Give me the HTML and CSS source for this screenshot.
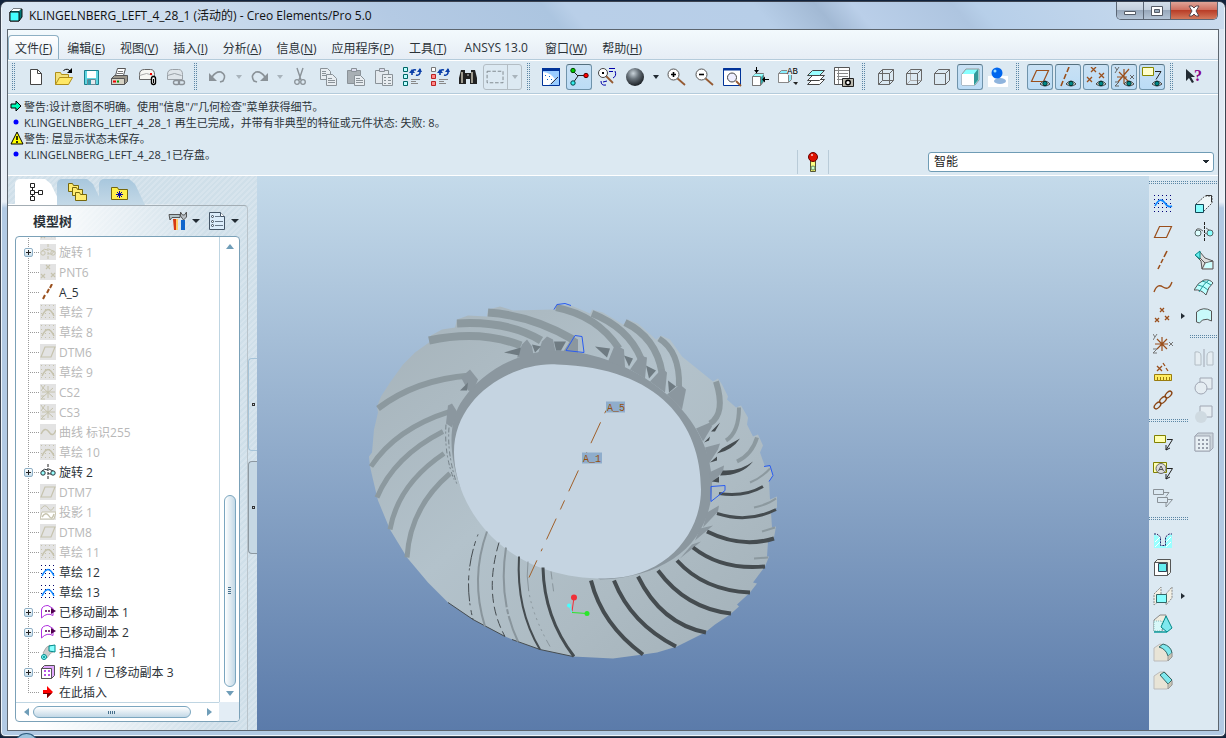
FILE: index.html
```html
<!DOCTYPE html>
<html lang="zh-CN">
<head>
    <meta charset="UTF-8">
    <meta name="viewport" content="width=device-width, initial-scale=1.0">
    <title>KLINGELNBERG_LEFT_4_28_1 (活动的) - Creo Elements/Pro 5.0</title>
    <link rel="stylesheet" href="styles.css">
</head>
<body>
    <!-- Iconos compartidos -->
    <svg class="defs" width="0" height="0">
        <symbol id="t-rev" viewBox="0 0 16 16"><path d="M8 0v16" stroke="var(--dot)" stroke-dasharray="3 1"/><path d="M2 7Q4 4 8 6M8 9Q12 12 14 7M9 5l4 2" stroke="currentColor" fill="none"/><circle cx="3" cy="9" r="2.2" fill="var(--fill)" stroke="currentColor"/><circle cx="13" cy="9" r="2.2" fill="var(--fill)" stroke="currentColor"/></symbol>
        <symbol id="t-pnt" viewBox="0 0 16 16"><path d="M6 1l4 4m0-4l-4 4M1 10l4 4m0-4l-4 4M11 9l4 4m0-4l-4 4" stroke="currentColor" stroke-width="1.2"/></symbol>
        <symbol id="t-axis" viewBox="0 0 16 16"><path d="M3 15l2-4M7 9l2-4M10 4l2-4" stroke="#9a4f1c" stroke-width="2"/></symbol>
        <symbol id="t-sketch" viewBox="0 0 16 16"><path d="M1 1.500h15M1 5.500h15M1 9.500h15M1 13.500h15" stroke="var(--dot)" stroke-dasharray="1 3"/><path d="M2 12Q8-1 14 12" stroke="currentColor" stroke-width="1.4" fill="none"/></symbol>
        <symbol id="t-dtm" viewBox="0 0 16 16"><path d="M5 3h10l-4 10H1z" stroke="currentColor" stroke-width="1.2" fill="none"/></symbol>
        <symbol id="t-cs" viewBox="0 0 16 16"><path d="M8 2v12M3 4l10 9M13 4L3 13M2 8h13M1 1l2 3m2-3L1 7M1 12h3l-3 3h4" stroke="currentColor" fill="none"/></symbol>
        <symbol id="t-curve" viewBox="0 0 16 16"><path d="M1 10Q5 2 9 8T16 6" stroke="currentColor" stroke-width="1.4" fill="none"/></symbol>
        <symbol id="t-proj" viewBox="0 0 16 16"><path d="M1 5Q5-1 8 4t6-1" stroke="currentColor" fill="none"/><path d="M2 8h14l-2 7H0z" fill="#fff" stroke="currentColor"/><path d="M2 13Q6 7 9 12t5-2" stroke="currentColor" stroke-width="1.4" fill="none"/></symbol>
        <symbol id="t-move" viewBox="0 0 16 16"><path d="M1.500 14V6Q2 1.500 8 1.500l5 3v7Q7 8 1.500 14z" fill="#fff" stroke="#b030e0"/><path d="M5 7h7" stroke="#500050" stroke-width="1.600" stroke-dasharray="2 1"/><path d="M11 4l5 3-5 3z" fill="#500050"/></symbol>
        <symbol id="t-sweep" viewBox="0 0 16 16"><path d="M3 9Q6 2 10 1l5 6q-5 1-8 7z" fill="#ccc" stroke="#888" stroke-width=".6"/><path d="M9 2l6-1v7l-6-1z" fill="#8ff" stroke="#088"/><circle cx="4" cy="13" r="2.500" fill="#8ff" stroke="#088"/><circle cx="4" cy="13" r="1" fill="#088"/></symbol>
        <symbol id="t-pattern" viewBox="0 0 16 16"><path d="M1.500 4.500l3-3h10v10l-3 3h-10z" fill="#e2a8ff" stroke="#555"/><path d="M1.500 4.500h10v10h-10z" fill="#fff" stroke="#555"/><path d="M4 7h6M4 11h6" stroke="#a020e0" stroke-width="1.600" stroke-dasharray="2 2"/></symbol>
        <symbol id="t-insert" viewBox="0 0 16 16"><path d="M3 6h4V2l6 6-6 6v-4H3z" fill="#f00"/><path d="M3 9h9l-5 5v-4H3z" fill="#700"/></symbol>
        <symbol id="eye" viewBox="0 0 10 8"><path d="M0 5Q5-1 10 5 5 9 0 5z" fill="#ddd" stroke="#444"/><circle cx="5" cy="4.500" r="2.200" fill="#088" stroke="#033"/></symbol>
        <symbol id="note" viewBox="0 0 20 20"><path d="M1.500 3.500h11v7h-11z" fill="var(--paper)" stroke="var(--edge)"/><path d="M14 7.500h5.500L13 18m0-5v5l4-2" fill="none" stroke="var(--ink)"/></symbol>
    </svg>

    <div class="window">
        <div class="titlebar">
            <svg class="app-icon" viewBox="0 0 14 14"><path d="M1 4l3-3h9v8l-3 4H1z" fill="#077" stroke="#111"/><path d="M1 4h9v9H1z" fill="#4ff" stroke="#111"/><path d="M2 3l2-2h8l-2 2z" fill="#fff"/></svg>
            <span class="title">KLINGELNBERG_LEFT_4_28_1 (活动的) - Creo Elements/Pro 5.0</span>
            <div class="window-buttons">
                <button aria-label="最小化"><svg viewBox="0 0 14 12"><path d="M1.500 6.500h11v3h-11z" fill="#fff" stroke="#555b66"/></svg></button>
                <button aria-label="最大化"><svg viewBox="0 0 14 12"><path d="M1.500 1.500h11v9h-11z" fill="#fff" stroke="#555b66"/><path d="M4.500 4.500h5v3h-5z" fill="#9ab" stroke="#555b66"/></svg></button>
                <button class="close" aria-label="关闭"><svg viewBox="0 0 14 12"><path d="M2 1h3l2 2 2-2h3l-3 5 3 5H9L7 9l-2 2H2l3-5z" fill="#fff" stroke="#59464c"/></svg></button>
            </div>
        </div>

        <div class="client">
            <nav class="menubar">
                <button class="active">文件(<u>F</u>)</button>
                <button>编辑(<u>E</u>)</button>
                <button>视图(<u>V</u>)</button>
                <button>插入(<u>I</u>)</button>
                <button>分析(<u>A</u>)</button>
                <button>信息(<u>N</u>)</button>
                <button>应用程序(<u>P</u>)</button>
                <button>工具(<u>T</u>)</button>
                <button class="wide">ANSYS 13.0</button>
                <button>窗口(<u>W</u>)</button>
                <button>帮助(<u>H</u>)</button>
            </nav>

            <div class="toolbar">
                <span class="grip"></span>
                <button class="tool" aria-label="新建"><svg viewBox="0 0 20 20"><path d="M4.500 2.500h7l4 4v11h-11z" fill="#fff" stroke="#444"/><path d="M11.500 2.500v4h4" fill="none" stroke="#444"/></svg></button>
                <button class="tool" aria-label="打开"><svg viewBox="0 0 20 20"><path d="M1.500 17.500v-12h5l1 2h7v3" fill="#f3e27c" stroke="#b08e18"/><path d="M1.500 17.500l4-7h13l-4 7z" fill="#ffe866" stroke="#b08e18"/><path d="M9.500 3.500q4-3 7 1" fill="none" stroke="#000"/><path d="M18 1v5h-5z" fill="#000"/></svg></button>
                <button class="tool" aria-label="保存"><svg viewBox="0 0 20 20"><path d="M2.500 3.500h14v14h-14z" fill="#5fd6e2" stroke="#1b7f8c"/><path d="M5 4h9v7H5z" fill="#fff"/><path d="M5.500 12.500h8v5h-8z" fill="#e4eaee" stroke="#6a8a96"/><path d="M6 13h3v5H6z" fill="#39a"/></svg></button>
                <button class="tool" aria-label="打印"><svg viewBox="0 0 20 20"><path d="M5.500 8.500l2-7h8l-2 7z" fill="#fff" stroke="#555"/><path d="M8 4.500h5M7 6.500h6" stroke="#777"/><path d="M1.500 11.500l3-3h13v6l-3 3h-13z" fill="#9b968a" stroke="#555"/><path d="M1.500 11.500h13v6h-13z" fill="#d7d3c5" stroke="#555"/><path d="M3 14.500h3" stroke="#e00" stroke-width="2"/><path d="M7 14.500h2" stroke="#090" stroke-width="2"/></svg></button>
                <button class="tool" aria-label="附件发送"><svg viewBox="0 0 20 20"><path d="M1.500 12.500v-5q0-5 5-5h6q4 0 4 5v5z" fill="#f7f7f3" stroke="#666"/><path d="M1.500 8.500l7-2 7 2" fill="none" stroke="#aaa"/><path d="M12 6h2v2h-2z" fill="#e00"/><rect x="13.500" y="9.500" width="4" height="8" rx="2" fill="#fff" stroke="#000" stroke-width="1.400"/><path d="M15.500 12v4" stroke="#000"/></svg></button>
                <button class="tool" aria-label="链接发送"><svg viewBox="0 0 20 20"><path d="M1.500 12.500v-5q0-5 5-5h6q4 0 4 5v5z" fill="#dfe5ea" stroke="#9aa1a7"/><path d="M1.500 8.500l7-2 7 2" fill="none" stroke="#9aa1a7"/><rect x="7.500" y="13.500" width="6" height="4" rx="2" fill="none" stroke="#8b9298" stroke-width="1.400"/><rect x="12.500" y="13.500" width="6" height="4" rx="2" fill="none" stroke="#8b9298" stroke-width="1.400"/></svg></button>
                <span class="grip"></span>
                <button class="tool" aria-label="撤消"><svg viewBox="0 0 20 20"><path d="M4 10q4-6 9-5 6 3 2 9l-3 1" fill="none" stroke="#8a9298" stroke-width="1.600"/><path d="M1 6v8h8z" fill="#8a9298"/></svg></button>
                <button class="drop off" aria-label="撤消列表"></button>
                <button class="tool" aria-label="重做"><svg viewBox="0 0 20 20"><path d="M16 10q-4-6-9-5-6 3-2 9l3 1" fill="none" stroke="#8a9298" stroke-width="1.600"/><path d="M19 6v8h-8z" fill="#8a9298"/></svg></button>
                <button class="drop off" aria-label="重做列表"></button>
                <button class="tool" aria-label="剪切"><svg viewBox="0 0 20 20"><path d="M7 1l4 12M13 1L9 13" stroke="#8a9298" stroke-width="1.400"/><circle cx="7" cy="15" r="2.300" fill="none" stroke="#8a9298" stroke-width="1.300"/><circle cx="13" cy="15" r="2.300" fill="none" stroke="#8a9298" stroke-width="1.300"/></svg></button>
                <button class="tool" aria-label="复制"><svg viewBox="0 0 20 20"><g fill="#e8edf1" stroke="#8a9298"><path d="M2.500 1.500h7l3 3v8h-10z"/><path d="M4 4.500h4M4 6.500h4M4 8.500h4"/><path d="M8.500 7.500h6l4 4v7h-10z"/><path d="M10 11.500h4M10 13.500h7M10 15.500h7"/></g></svg></button>
                <button class="tool" aria-label="粘贴"><svg viewBox="0 0 20 20"><path d="M1.500 3.500h13v13h-13z" fill="#a8afb4" stroke="#8a9298"/><path d="M5.500 1.500h5v3h-5z" fill="#dde" stroke="#8a9298"/><path d="M8.500 8.500h6l4 4v6h-10z" fill="#e8edf1" stroke="#8a9298"/><path d="M10 11.500h4M10 13.500h7M10 15.500h7" stroke="#8a9298"/></svg></button>
                <button class="tool" aria-label="选择性粘贴"><svg viewBox="0 0 20 20"><path d="M1.500 3.500h13v13h-13z" fill="#e3e9ee" stroke="#8a9298"/><path d="M5.500 1.500h5v3h-5z" fill="#dde" stroke="#8a9298"/><path d="M8.500 7.500h10v11h-10z" fill="#e8edf1" stroke="#8a9298"/><path d="M10 10.500h2M10 13.500h2M10 16.500h2M14 10.500h3M14 13.500h3M14 16.500h3" stroke="#8a9298"/></svg></button>
                <button class="tool" aria-label="再生"><svg viewBox="0 0 20 20"><path d="M1.500.5h4v4h-4zM1.500 7.500h4v4h-4zM1.500 14.500h4v4h-4z" fill="#bff" stroke="#066"/><path d="M9 12.500h9M9 14.500h5M9 16.500h7" stroke="#888"/><path d="M10 8V5q1-3 4-2M18 2v4q-1 3-4 2" fill="none" stroke="#0a3fa8" stroke-width="1.600"/><path d="M7 6h6l-3-4zM15 5h5l-2-4z" fill="#0a3fa8"/></svg></button>
                <button class="tool" aria-label="再生管理器"><svg viewBox="0 0 20 20"><path d="M1.500.5h4v4h-4z" fill="#fff" stroke="#777"/><path d="M1.500 7.500h4v4h-4zM1.500 14.500h4v4h-4z" fill="#f88" stroke="#b22"/><path d="M9 12.500h9M9 14.500h5M9 16.500h7" stroke="#888"/><path d="M10 8V5q1-3 4-2M18 2v4q-1 3-4 2" fill="none" stroke="#0a3fa8" stroke-width="1.600"/><path d="M7 6h6l-3-4zM15 5h5l-2-4z" fill="#0a3fa8"/></svg></button>
                <button class="tool" aria-label="查找"><svg viewBox="0 0 20 20"><path d="M3 3h4v3h6V3h4l2 8v6h-7v-5H8v5H1v-6z" fill="#222"/><path d="M4 5v11M14 5v11" stroke="#c9c3b4" stroke-width="1.500"/><path d="M9 8h2" stroke="#ccc"/></svg></button>
                <button class="picker" aria-label="选择框"><svg viewBox="0 0 26 24"><path d="M3.500 5.500h18v13h-18z" fill="none" stroke="#777f85" stroke-dasharray="4 2"/></svg><span class="drop off"></span></button>
                <span class="grip"></span>
                <button class="tool" aria-label="重画"><svg viewBox="0 0 20 20"><path d="M1.500 1.500h17v17h-17z" fill="#9cf" stroke="#039"/><path d="M1 2.500h18" stroke="#039" stroke-width="3"/><path d="M2 5q8 1 12 7l-6 6H2z" fill="#fff"/><path d="M4 8l1 1M8 9l1 1M6 12l1 1M10 12l1 1" stroke="#06c"/><path d="M10 17l7-7" stroke="#334"/></svg></button>
                <button class="tool on" aria-label="旋转中心"><svg viewBox="0 0 20 20"><path d="M4 4l5 5-5 7M9 8.500h8" fill="none" stroke="#222"/><circle cx="4" cy="3.500" r="2.200" fill="#0c0" stroke="#040"/><circle cx="17" cy="8.500" r="2.200" fill="#f00" stroke="#500"/><circle cx="4" cy="16" r="2.200" fill="#3ee" stroke="#044"/></svg></button>
                <button class="tool" aria-label="定向模式"><svg viewBox="0 0 20 20"><path d="M9 9l7 7" stroke="#955a32" stroke-width="1.800"/><circle cx="6" cy="6" r="4.500" fill="#fff" stroke="#444"/><path d="M5 6h2" stroke="#000" stroke-width="2"/><path d="M12 1.500h6M12 4.500h4M18 4q2 5-2 7M4 14q0 5 5 4M10 14l-4 1" stroke="#00a" fill="none"/></svg></button>
                <button class="tool" aria-label="外观库"><svg viewBox="0 0 20 20"><defs><radialGradient id="ball" cx=".4" cy=".3" r=".7"><stop offset="0" stop-color="#c9d3da"/><stop offset=".45" stop-color="#68727a"/><stop offset="1" stop-color="#1c2126"/></radialGradient></defs><circle cx="10" cy="10" r="9" fill="url(#ball)"/></svg></button>
                <button class="drop" aria-label="外观列表"></button>
                <button class="tool" aria-label="放大"><svg viewBox="0 0 20 20"><path d="M11 11l8 7" stroke="#955a32" stroke-width="1.800"/><circle cx="7.500" cy="7.500" r="5.500" fill="#fff" stroke="#555"/><path d="M5 7.500h5M7.500 5v5" stroke="#000" stroke-width="1.600"/></svg></button>
                <button class="tool" aria-label="缩小"><svg viewBox="0 0 20 20"><path d="M11 11l8 7" stroke="#955a32" stroke-width="1.800"/><circle cx="7.500" cy="7.500" r="5.500" fill="#fff" stroke="#555"/><path d="M5 7.500h5" stroke="#000" stroke-width="1.600"/></svg></button>
                <button class="tool" aria-label="重新调整"><svg viewBox="0 0 20 20"><path d="M1.500 1.500h17v17h-17z" fill="#fff" stroke="#039"/><path d="M1 2.500h18" stroke="#039" stroke-width="2"/><path d="M14 14l5 5" stroke="#955a32" stroke-width="1.800"/><circle cx="10" cy="10.500" r="4.500" fill="#eef" stroke="#444"/></svg></button>
                <button class="tool" aria-label="重定向"><svg viewBox="0 0 20 20"><path d="M2.500 9.500l3-3h8v8l-3 4h-8z" fill="#3aa" stroke="#777"/><path d="M5 7h9l-3 3H2z" fill="#9ff"/><path d="M2.500 9.500h8v9h-8z" fill="#fff" stroke="#777"/><path d="M6.500 0v6M19 12.500h-6" stroke="#000"/><path d="M4 3h5L6.500 6zM12 12.500l3-3v6z" fill="#000"/></svg></button>
                <button class="tool" aria-label="已命名视图"><svg viewBox="0 0 20 20"><path d="M.5 6.500l3-3h10v9l-3 3H.5z" fill="#8ef" stroke="#888"/><path d="M.5 6.500h10v9H.5z" fill="#fff" stroke="#888"/><path d="M15 15h5l-2 3z" fill="#222"/><path d="M9 0h11v8H9z" fill="#dce9f2"/><text x="9" y="7" font-size="9" font-family="Liberation Mono">AB</text></svg></button>
                <button class="tool" aria-label="层"><svg viewBox="0 0 20 20"><g stroke="#444"><path d="M1.500 17.500l5-5h12l-5 5z" fill="#fff"/><path d="M1.500 13.500l5-5h12l-5 5z" fill="#fff"/><path d="M1.500 8.500l5-5h12l-5 5z" fill="#9ff"/></g></svg></button>
                <button class="tool" aria-label="视图管理器"><svg viewBox="0 0 20 20"><path d="M.5.5h15v17H.5z" fill="#fff" stroke="#555"/><path d="M1 3.500h14M3 6.500h11M3 9.500h11M3 12.500h6M4.500 1v16" stroke="#888"/><path d="M8.500 11.500h11v8h-11z" fill="#bbb9ae" stroke="#222"/><circle cx="14" cy="15.500" r="2.300" fill="#fff" stroke="#000" stroke-width="1.400"/></svg></button>
                <span class="grip"></span>
                <button class="tool" aria-label="线框"><svg viewBox="0 0 20 20"><path d="M2.500 6.500h11v11h-11zM6.500 2.500h11v11h-11zM2.500 6.500l4-4M13.500 6.500l4-4M2.500 17.500l4-4M13.500 17.500l4-4" fill="none" stroke="#666"/></svg></button>
                <button class="tool" aria-label="隐藏线"><svg viewBox="0 0 20 20"><path d="M6.500 3v10.500h11M2.500 17.500l4-4" fill="none" stroke="#aaa"/><path d="M2.500 6.500h11v11h-11zM2.500 6.500l4-4h11v11l-4 4M13.500 6.500l4-4" fill="none" stroke="#666"/></svg></button>
                <button class="tool" aria-label="消隐"><svg viewBox="0 0 20 20"><path d="M2.500 6.500h11v11h-11zM2.500 6.500l4-4h11v11l-4 4M13.500 6.500l4-4" fill="none" stroke="#666"/></svg></button>
                <button class="tool on" aria-label="着色"><svg viewBox="0 0 20 20"><path d="M2 7l4-5h13v11l-4 5H2z" fill="#8ff" stroke="#999"/><path d="M14 7l4-5v11l-4 5z" fill="#399"/><path d="M2 7h12v11H2z" fill="#fff"/></svg></button>
                <button class="tool" aria-label="增强的真实感"><svg viewBox="0 0 20 20"><path d="M0 9h20v11H0z" fill="#fff"/><ellipse cx="12" cy="14" rx="6" ry="3" fill="#8fb4dd"/><circle cx="9" cy="6" r="5.500" fill="#06e"/><circle cx="7" cy="4" r="1.500" fill="#9df"/></svg></button>
                <span class="grip"></span>
                <button class="tool on" aria-label="平面显示"><svg viewBox="0 0 20 20"><path d="M6.500 3.500h12l-5 11h-12z" fill="none" stroke="#9a4f1c" stroke-width="1.200"/><use href="#eye" x="10" y="12" width="10" height="8"/></svg></button>
                <button class="tool on" aria-label="轴显示"><svg viewBox="0 0 20 20"><path d="M11 0L9 5M8 7l-2 5M5 14l-2 5" stroke="#9a4f1c" stroke-width="1.600"/><use href="#eye" x="8" y="12" width="10" height="8"/></svg></button>
                <button class="tool on" aria-label="点显示"><svg viewBox="0 0 20 20"><path d="M5 0l5 5m0-5L5 5M1 10l5 5m0-5l-5 5M13 6l5 5m0-5l-5 5" stroke="#9a4f1c" stroke-width="1.300"/><use href="#eye" x="10" y="12" width="10" height="8"/></svg></button>
                <button class="tool on" aria-label="坐标系显示"><svg viewBox="0 0 20 20"><path d="M10 2v15M5 5l10 10M15 2L4 15M3 10h10" stroke="#9a4f1c" stroke-width="1.200"/><path d="M1 0l2 3m2-3L1 6M1 15h4l-4 4h4M16 8l4 4m0-4l-4 4" fill="none" stroke="#666"/><use href="#eye" x="10" y="12" width="10" height="8"/></svg></button>
                <button class="tool on" aria-label="注释显示"><svg viewBox="0 0 20 20"><path d="M.5.500h11v8H.5z" fill="#ffc" stroke="#880"/><path d="M13 4.500h6l-5 8" fill="none" stroke="#222"/><use href="#eye" x="10" y="12" width="10" height="8"/></svg></button>
                <span class="grip"></span>
                <button class="tool" aria-label="上下文帮助"><svg viewBox="0 0 20 20"><path d="M2 2v12l3-3 3 5 2-1-3-5h4z" fill="#222b33"/><text x="10" y="14" font-size="16" font-weight="bold" font-family="Liberation Serif" fill="#808">?</text></svg></button>
            </div>

            <div class="messages">
                <ul>
                    <li><svg viewBox="0 0 12 12"><path d="M1 4h5V1l5 5-5 5V8H1z" fill="#0fb" stroke="#000"/></svg>警告:设计意图不明确。使用"信息"/"几何检查"菜单获得细节。</li>
                    <li><svg viewBox="0 0 12 12"><circle cx="6" cy="6" r="2.500" fill="#00f"/></svg>KLINGELNBERG_LEFT_4_28_1 再生已完成，并带有非典型的特征或元件状态: 失败: 8。</li>
                    <li><svg class="warn" viewBox="0 0 14 14"><path d="M7 1l6 12H1z" fill="#ff0" stroke="#000"/><path d="M7 5v4M7 10v2" stroke="#000" stroke-width="1.600"/></svg>警告: 层显示状态未保存。</li>
                    <li><svg viewBox="0 0 12 12"><circle cx="6" cy="6" r="2.500" fill="#00f"/></svg>KLINGELNBERG_LEFT_4_28_1已存盘。</li>
                </ul>
                <div class="status">
                    <button class="light" aria-label="再生状态"><svg viewBox="0 0 12 20"><path d="M3.500 8.500h5v11h-5z" fill="#ee6" stroke="#553"/><circle cx="6" cy="12" r="2" fill="#ff8"/><circle cx="6" cy="16" r="2" fill="#cfc" stroke="#686"/><circle cx="6" cy="5" r="4.500" fill="#d10" stroke="#600"/><circle cx="5" cy="3" r="1" fill="#fcc"/></svg></button>
                    <select class="filter" aria-label="选取过滤器"><option>智能</option></select>
                </div>
            </div>

            <div class="workspace">
                <aside class="navigator">
                    <div class="tabs">
                        <button class="tab active" aria-label="模型树"><svg viewBox="0 0 20 20"><path d="M4.500 1.500h4v4h-4zM4.500 8.500h4v4h-4zM4.500 14.500h4v4h-4zM12.500 8.500h4v4h-4z" fill="#fff" stroke="#222"/><path d="M6.500 6v2M9 10.500h3M6.500 13v1" stroke="#222"/></svg></button>
                        <button class="tab" aria-label="文件夹浏览器"><svg viewBox="0 0 20 20"><g fill="#ffec70" stroke="#75660c"><path d="M.5 1.500h4l1 2h5v6H.5z"/><path d="M4.500 5.500h4l1 2h5v6h-10z"/><path d="M7.500 10.500h4l1 2h6v6h-11z"/></g></svg></button>
                        <button class="tab" aria-label="收藏夹"><svg viewBox="0 0 20 20"><path d="M1.500 5.500h6l1 2h9v10h-16z" fill="#fff04a" stroke="#75660c"/><path d="M9.500 9v7M6 12.500h7M7 10l5 5M12 10l-5 5" stroke="#00a"/></svg></button>
                    </div>
                    <div class="panel">
                        <div class="panel-head">
                            <h2>模型树</h2>
                            <button class="tool" aria-label="设置"><svg viewBox="0 0 20 20"><path d="M5 8h3v11H6z" fill="#d63a10"/><path d="M8 8h2v11H8z" fill="#fc6"/><path d="M1 3.500h11v3H4L2 9z" fill="#b2c4c8" stroke="#555"/><path d="M13 9h4v10h-4z" fill="#16c"/><path d="M12.500 1v4l3 4 3-3V1l-2 3h-2z" fill="#b8bfc4" stroke="#555"/></svg></button>
                            <button class="drop" aria-label="设置列表"></button>
                            <button class="tool" aria-label="显示"><svg viewBox="0 0 20 20"><path d="M2.500 1.500h11l4 4v13h-15z" fill="#dcedfb" stroke="#456"/><path d="M13.500 1.500v4h4" fill="#fff" stroke="#456"/><path d="M8 5.500h5M8 10.500h8M8 14.500h8" stroke="#678"/><g fill="#fff" stroke="#345"><circle cx="5.500" cy="5.500" r="1"/><circle cx="5.500" cy="10.500" r="1"/><circle cx="5.500" cy="14.500" r="1"/></g></svg></button>
                            <button class="drop" aria-label="显示列表"></button>
                        </div>
                        <div class="tree">
                            <ul class="nodes">
                                <li class="off"><span class="branch"></span><svg><use href="#t-pnt"/></svg></li>
                                <li class="off"><span class="branch"><button aria-label="展开"></button></span><svg><use href="#t-rev"/></svg>旋转 1</li>
                                <li class="off"><span class="branch"></span><svg><use href="#t-pnt"/></svg>PNT6</li>
                                <li><span class="branch"></span><svg><use href="#t-axis"/></svg>A_5</li>
                                <li class="off"><span class="branch"></span><svg><use href="#t-sketch"/></svg>草绘 7</li>
                                <li class="off"><span class="branch"></span><svg><use href="#t-sketch"/></svg>草绘 8</li>
                                <li class="off"><span class="branch"></span><svg><use href="#t-dtm"/></svg>DTM6</li>
                                <li class="off"><span class="branch"></span><svg><use href="#t-sketch"/></svg>草绘 9</li>
                                <li class="off"><span class="branch"></span><svg><use href="#t-cs"/></svg>CS2</li>
                                <li class="off"><span class="branch"></span><svg><use href="#t-cs"/></svg>CS3</li>
                                <li class="off"><span class="branch"></span><svg><use href="#t-curve"/></svg>曲线 标识255</li>
                                <li class="off"><span class="branch"></span><svg><use href="#t-sketch"/></svg>草绘 10</li>
                                <li><span class="branch"><button aria-label="展开"></button></span><svg><use href="#t-rev"/></svg>旋转 2</li>
                                <li class="off"><span class="branch"></span><svg><use href="#t-dtm"/></svg>DTM7</li>
                                <li class="off"><span class="branch"></span><svg><use href="#t-proj"/></svg>投影 1</li>
                                <li class="off"><span class="branch"></span><svg><use href="#t-dtm"/></svg>DTM8</li>
                                <li class="off"><span class="branch"></span><svg><use href="#t-sketch"/></svg>草绘 11</li>
                                <li><span class="branch"></span><svg class="blue"><use href="#t-sketch"/></svg>草绘 12</li>
                                <li><span class="branch"></span><svg class="blue"><use href="#t-sketch"/></svg>草绘 13</li>
                                <li><span class="branch"><button aria-label="展开"></button></span><svg><use href="#t-move"/></svg>已移动副本 1</li>
                                <li><span class="branch"><button aria-label="展开"></button></span><svg><use href="#t-move"/></svg>已移动副本 2</li>
                                <li><span class="branch"></span><svg><use href="#t-sweep"/></svg>扫描混合 1</li>
                                <li><span class="branch"><button aria-label="展开"></button></span><svg><use href="#t-pattern"/></svg>阵列 1 / 已移动副本 3</li>
                                <li class="last"><span class="branch"></span><svg><use href="#t-insert"/></svg>在此插入</li>
                            </ul>
                            <div class="vscroll">
                                <button class="up" aria-label="向上"></button>
                                <span class="thumb"></span>
                                <button class="down" aria-label="向下"></button>
                            </div>
                            <div class="hscroll">
                                <button class="left" aria-label="向左"></button>
                                <span class="thumb"></span>
                                <button class="right" aria-label="向右"></button>
                            </div>
                            <div class="corner"></div>
                        </div>
                    </div>
                    <div class="sash">
                        <button aria-label="导航器"></button>
                        <button class="dark" aria-label="浏览器"></button>
                    </div>
                </aside>

                <main class="viewport">
                    <svg viewBox="257 177 892 553">
                        <defs>
                            <linearGradient id="body" x1="0" y1="0" x2="1" y2="1">
                                <stop offset="0" stop-color="#a5b2b9"/>
                                <stop offset=".45" stop-color="#b3c2cb"/>
                                <stop offset=".7" stop-color="#adbbc3"/>
                                <stop offset="1" stop-color="#a2b0b8"/>
                            </linearGradient>
                        </defs>
                        <path fill="url(#body)" d="M377 407L381 397 390 383 403 365 415 353 429 343 431 336 442 330 455 328 457 320 468 316 487 317 488 310 500 307 513 311 553 310 557 305 571 306 590 314 592 310 603 313 623 325 628 320 638 324 656 340 661 336 670 340 682 357 713 382 718 379 722 385 728 397 727 400 736 408 741 406 748 418 747 425 753 437 758 435 763 446 760 453 765 467 770 467 773 476 769 482 770 500 777 497 777 508 771 513 772 528 776 527 774 538 768 542 767 557 769 557 765 567 753 583 757 584 750 593 737 605 739 607 730 615 715 625 705 633 687 642 677 647 657 653 643 655 613 659 573 657 540 650 520 643 505 637 473 620 448 603 428 583 407 558 390 530 378 501 373 480 370 467 369 457 372 453 374 430 378 413z"/>

                        <!-- dientes iluminados -->
                        <g fill="none" stroke="#8c999f" stroke-width="6">
                            <path d="M378 409Q416 380 470 376"/>
                            <path d="M371 467Q396 429 450 412" stroke-width="5"/>
                            <path d="M377 498Q394 457 443 432" stroke-width="5"/>
                            <path d="M390 530Q398 485 444 454" stroke-width="5"/>
                            <path d="M407 558Q410 508 450 474" stroke-width="5"/>
                            <path d="M429 341Q480 330 521 346" stroke-width="8"/>
                            <path d="M457 324Q508 321 541 341" stroke-width="8"/>
                            <path d="M488 313Q532 316 573 340" stroke-width="8"/>
                            <path d="M556 308Q597 316 619 349" stroke-width="7"/>
                            <path d="M592 314Q628 328 641 359" stroke-width="7"/>
                            <path d="M625 323Q656 338 662 373" stroke-width="7"/>
                            <path d="M659 339Q680 352 679 387" stroke-width="6"/>
                            <path d="M716 382Q726 414 710 424" stroke-width="6"/>
                            <path d="M739 408Q739 433 726 441" stroke-width="4"/>
                            <path d="M757 438Q752 455 737 462" stroke-width="4"/>
                            <path d="M770 469Q762 478 750 483" stroke-width="2"/>
                            <path d="M776 499Q768 505 754 508M775 528L762 532M768 558L754 559" stroke-width="2"/>
                        </g>

                        <!-- corona interior -->
                        <path fill="#8b979f" d="M461 489C448 455 448 420 463 400 482 372 520 350 560 351 630 354 712 410 712 485 712 540 670 578 600 580z"/>
                        <g fill="#8b979f">
                            <path d="M517 358L522 345 527 340 532 347 534 358z"/>
                            <path d="M538 354L542 342 547 337 553 340 556 354z"/>
                            <path d="M562 354L573 337 578 340 578 354z"/>
                            <path d="M608 362L615 345 624 350 625 368z"/>
                            <path d="M630 370L640 356 647 358 645 379z"/>
                            <path d="M650 382L662 369 667 373 665 393z"/>
                            <path d="M667 395L680 385 686 390 682 410z"/>
                            <path d="M696 429L710 423 712 427 703 442z"/>
                            <path d="M705 448L720 444 718 450 709 464z"/>
                            <path d="M709 473L724 466 723 472 711 484z"/>
                            <path d="M461 378L470 370 478 380 473 392 468 391z"/>
                            <path d="M448 406L452 404 457 412 452 428 446 424z"/>
                            <path d="M707 513L719 506 718 512 703 528zM700 529L713 526 695 541zM692 545L701 542 680 559z"/>
                        </g>
                        <g fill="#6f7b82">
                            <path d="M504 353L521 348 519 356z"/>
                            <path d="M532 345L541 347 535 353z"/>
                            <path d="M554 342L566 342 561 351 556 351z"/>
                            <path d="M595 347L610 349 607 358z"/>
                            <path d="M624 356L633 359 629 367z"/>
                            <path d="M646 366L656 371 649 379z"/>
                            <path d="M668 381L676 387 669 393z"/>
                            <path d="M460 391L468 383 467 391z"/>
                        </g>
                        <path fill="none" stroke="#78848b" stroke-dasharray="5 2 2 3" d="M446 425Q444 455 454 480M449 428Q447 455 457 485"/>
                        <path fill="#c5d4e1" d="M557 365C515 362 454 395 454 453 454 500 495 579 605 579 665 579 701 535 701 490 701 425 660 368 557 365z"/>

                        <!-- dientes en sombra -->
                        <g fill="#454c50">
                            <path d="M720 423L711 432 715 432zM704 443L710 437 709 441zM740 439Q732 451 717 454L722 449zM753 462Q742 476 720 476L723 471Q740 472 753 462zM710 463L717 457 717 461zM712 482L719 477 719 483z"/>
                        </g>
                        <g fill="none" stroke="#454c50" stroke-width="4">
                            <path d="M719 494Q744 498 763 487" stroke-width="3"/>
                            <path d="M717 514Q748 524 776 510" stroke-width="3"/>
                            <path d="M707 532Q741 549 774 539"/>
                            <path d="M693 548Q722 571 765 567"/>
                            <path d="M677 561Q704 591 750 593"/>
                            <path d="M658 571Q686 609 731 614"/>
                            <path d="M638 577Q661 624 706 633"/>
                            <path d="M614 581Q631 624 676 647"/>
                            <path d="M591 581Q602 625 643 655"/>
                            <path d="M543 568Q544 618 574 657" stroke-width="3"/>
                            <path d="M519 557Q516 610 540 650" stroke-width="2"/>
                        </g>
                        <g fill="none" stroke="#454c50" stroke-width="1">
                            <path d="M499 543Q483 597 505 637" stroke-dasharray="9 4"/>
                            <path d="M478 535Q462 577 473 620" stroke-dasharray="2 5 5 3 18 2"/>
                            <path d="M448 603L473 620 505 637M512 640L540 650 573 657"/>
                        </g>
                        <g fill="none" stroke="#89959c" stroke-width="2">
                            <path d="M487 532Q470 579 485 627"/>
                            <path d="M506 548Q498 600 518 642" stroke-dasharray="60 2 5 2"/>
                            <path d="M528 562Q523 600 550 647" stroke-width="1" stroke-dasharray="30 4 2 4 2 4 2 4 2 4 2 4 2 4 2 4 2 4"/>
                            <path d="M551 572L554 595" stroke-width="1" stroke-dasharray="8 4"/>
                        </g>

                        <!-- aristas seleccionadas -->
                        <g fill="none" stroke="#2a5cf0">
                            <path d="M566 351L575 336 582 337 584 353z"/>
                            <path d="M554 310L557 305 565 304 571 306"/>
                            <path d="M711 502V487L725 486V491z"/>
                            <path d="M764 467L770 466 773 476 769 482"/>
                        </g>

                        <!-- ejes -->
                        <path fill="none" stroke="#a0602a" d="M606 411L529 578" stroke-dasharray="3 10 23 10 10 10 23 10 10 10 23 10"/>
                        <path fill="#8fadcc" d="M606 402h19v11h-19zM582 453h20v11h-20z"/>
                        <g class="axis-label">
                            <text x="607" y="411">A_5</text>
                            <text x="583" y="462">A_1</text>
                        </g>
                        <path d="M574 598L572 612" stroke="#f03038"/><circle cx="574" cy="598" r="3" fill="#f03038"/>
                        <path d="M569 606L572 613" stroke="#4ff"/><circle cx="569" cy="606" r="2" fill="#4ff"/>
                        <path d="M572 613L587 614" stroke="#2ae62a"/><circle cx="587" cy="614" r="2.500" fill="#2ae62a"/>
                    </svg>
                </main>

                <div class="features">
                    <div class="column">
                        <span class="rule"></span>
                        <button class="tool" aria-label="草绘"><svg viewBox="0 0 20 20"><path d="M1 1.500h19M1 5.500h19M1 9.500h19M1 13.500h19M1 17.500h19" stroke="#007" stroke-dasharray="1 3"/><path d="M2 12q5-10 10-3 3 5 7 3" fill="none" stroke="#0a84ff" stroke-width="1.600"/></svg></button>
                        <button class="tool" aria-label="平面"><svg viewBox="0 0 20 20"><path d="M6.500 4.500h12l-5 11h-12z" fill="none" stroke="#9a4f1c" stroke-width="1.200"/></svg></button>
                        <button class="tool" aria-label="轴"><svg viewBox="0 0 20 20"><path d="M14 1l-3 6M10 9l-2 4M7 15l-2 4" stroke="#9a4f1c" stroke-width="1.600"/></svg></button>
                        <button class="tool" aria-label="曲线"><svg viewBox="0 0 20 20"><path d="M1 14Q4 5 10 9t9-5" fill="none" stroke="#9a4f1c" stroke-width="1.300"/></svg></button>
                        <div class="flyout">
                            <button class="tool" aria-label="点"><svg viewBox="0 0 20 20"><path d="M7 2l4 4m0-4L7 6M2 12l4 4m0-4l-4 4M12 10l4 4m0-4l-4 4" stroke="#9a4f1c" stroke-width="1.300"/></svg></button>
                            <button class="more" aria-label="更多点"></button>
                        </div>
                        <button class="tool" aria-label="坐标系"><svg viewBox="0 0 20 20"><path d="M9 3v14M4 5l10 10M14 5L4 15M2 10h13" stroke="#9a4f1c" stroke-width="1.200"/><path d="M0 0l2 3m2-3L0 6M0 15h4l-4 4h4M16 8l4 4m0-4l-4 4" fill="none" stroke="#777"/></svg></button>
                        <button class="tool" aria-label="分析"><svg viewBox="0 0 20 20"><path d="M4 4l5 5m0-5L4 9M10 1l2 3M13 6l2 3" stroke="#9a4f1c" stroke-width="1.300"/><path d="M1.500 12.500h17v6h-17z" fill="#ffec60" stroke="#997c10"/><path d="M4.500 15v3M7.500 15v3M10.500 15v3M13.500 15v3M16.500 15v3" stroke="#997c10"/></svg></button>
                        <button class="tool" aria-label="参照"><svg viewBox="0 0 20 20"><g fill="none" stroke="#8a4514" stroke-width="1.400"><ellipse cx="4.500" cy="15.500" rx="4" ry="2.300" transform="rotate(-45 4.500 15.500)"/><ellipse cx="10" cy="10" rx="4" ry="2.300" transform="rotate(-45 10 10)"/><ellipse cx="15.500" cy="4.500" rx="4" ry="2.300" transform="rotate(-45 15.500 4.500)"/></g></svg></button>
                        <span class="rule"></span>
                        <button class="tool" aria-label="注释"><svg class="note" viewBox="0 0 20 20"><use href="#note" width="20" height="20"/></svg></button>
                        <button class="tool" aria-label="注释特征"><svg class="note" viewBox="0 0 20 20"><path d="M.5 2.500h13v10H.5z" fill="#ffffb0" stroke="#808000"/><path d="M14 8.500h5.500L13 19m0-5v5l4-2" fill="none" stroke="#222"/><circle cx="8" cy="8.500" r="5" fill="#ddd" stroke="#666"/><path d="M5.500 11l2.500-5 2.500 5M6 9.500h4" fill="none" stroke="#555"/></svg></button>
                        <button class="tool" aria-label="注释组"><svg viewBox="0 0 20 20"><path d="M.5 1.500h10v5H.5zM4.500 9.500h10v5h-10z" fill="none" stroke="#8a9298"/><path d="M11 4.500h5l-3 4M15 11.500h4.500L13 19v-4" fill="none" stroke="#8a9298"/></svg></button>
                        <span class="rule"></span>
                        <button class="tool" aria-label="孔"><svg viewBox="0 0 20 20"><path d="M1 4l4 2 3 3v7h4V9l3-3 4-2v14H1z" fill="#9ff"/><path d="M2 12l5-5M2 17l5-5M13 12l5-5M13 17l5-5" stroke="#fff"/><path d="M1 4h3l3.500 3v8.500h5V7L16 4h3" fill="none" stroke="#226" stroke-dasharray="2 1"/></svg></button>
                        <button class="tool" aria-label="壳"><svg viewBox="0 0 20 20"><path d="M1.500 4.500l3-3h13v13l-3 3h-13z" fill="#f3f0e4" stroke="#555"/><path d="M1.500 4.500h13v13h-13z" fill="#fff" stroke="#555"/><path d="M5.500 5.500h8v8h-8z" fill="#6ee" stroke="#345"/></svg></button>
                        <div class="flyout">
                            <button class="tool" aria-label="筋"><svg viewBox="0 0 20 20"><path d="M1 8l7-7v12l-7 6zM13 8l6-7v11l-6 7z" fill="#f3f0e4" stroke="#888" stroke-dasharray="2 1"/><path d="M3.500 8.500h10v8h-10z" fill="#8ff" stroke="#366"/></svg></button>
                            <button class="more" aria-label="更多筋"></button>
                        </div>
                        <button class="tool" aria-label="拔模"><svg viewBox="0 0 20 20"><path d="M1 6l6-5h6v4l-4 12H1z" fill="#efecdf" stroke="#888"/><path d="M1 7h8v10H1z" fill="#d8f8f8" stroke="#8bb" stroke-dasharray="1 1"/><path d="M8 13l5-11 6 12-5 4z" fill="#7fe8ee" stroke="#088"/><path d="M1 18h13" stroke="#099" stroke-width="1.400"/></svg></button>
                        <button class="tool" aria-label="倒圆角"><svg viewBox="0 0 20 20"><path d="M1 6l6-4q11 2 12 10v3l-5 4H1z" fill="#e8e4d6" stroke="#bbb"/><path d="M6 5l4-3q8 2 9 9l-4 3Q13 7 6 5z" fill="#7fe8ee" stroke="#366"/><path d="M15 14v5l4-4v-4" fill="#c9c4b2" stroke="#999"/></svg></button>
                        <button class="tool" aria-label="倒角"><svg viewBox="0 0 20 20"><path d="M1 6l6-4h5l7 8v5l-5 4H1z" fill="#e8e4d6" stroke="#bbb"/><path d="M7 5l4-3 8 8-4 4z" fill="#7fe8ee" stroke="#366"/><path d="M15 14v5l4-4v-4" fill="#c9c4b2" stroke="#999"/></svg></button>
                    </div>
                    <div class="column">
                        <span class="rule"></span>
                        <button class="tool" aria-label="拉伸"><svg viewBox="0 0 20 20"><path d="M2 10l9-8h7v7l-8 8" fill="#eef6f8" stroke="#555" stroke-dasharray="2 1"/><path d="M12 1.500h5.500V8" fill="none" stroke="#333"/><path d="M1.500 10.500h8v8h-8z" fill="#8ff" stroke="#145"/></svg></button>
                        <button class="tool" aria-label="旋转"><svg viewBox="0 0 20 20"><path d="M10.500 0v20" stroke="#222" stroke-dasharray="3 1"/><path d="M2 8Q4 5 9 9M11 11q4 3 7-3M12 6l6 4" fill="none" stroke="#666"/><circle cx="4" cy="11" r="3" fill="#dff" stroke="#566"/><circle cx="16" cy="11" r="3" fill="#8ff" stroke="#566"/></svg></button>
                        <button class="tool" aria-label="可变截面扫描"><svg viewBox="0 0 20 20"><path d="M2 6l4-4 5 6 8 3v8H8l-1-8z" fill="#ddd" stroke="#555"/><path d="M1 5l5-4v8z" fill="#6ee" stroke="#088"/><path d="M6 8l5 5-3 6M11 13l8-2" fill="none" stroke="#555"/><path d="M12 13l6-1v6h-8z" fill="#cff"/></svg></button>
                        <button class="tool" aria-label="边界混合"><svg viewBox="0 0 20 20"><path d="M0 12Q4 4 10 2q6-1 9 3-5 4-7 12-5-6-12-5z" fill="#bff" stroke="#555"/><path d="M4 7q6 1 10 5M8 3q5 1 9 4M5 14q5-9 10-12" fill="none" stroke="#299"/></svg></button>
                        <button class="tool" aria-label="造型"><svg viewBox="0 0 20 20"><path d="M2.500 16V6q7-6 15-1v10q-4-3-9-1l-3 3z" fill="#c8fafa" stroke="#555"/></svg></button>
                        <span class="rule"></span>
                        <button class="tool off" aria-label="镜像"><svg viewBox="0 0 20 20"><path d="M1 4q6-1 6 4v9H1zM19 4q-6-1-6 4v9h6z" fill="#eef1f3" stroke="#8a9298"/><path d="M10 1v18" stroke="#667"/></svg></button>
                        <button class="tool off" aria-label="合并"><svg viewBox="0 0 20 20"><path d="M6 2h12v11H6z" fill="#eef1f3" stroke="#667"/><circle cx="7" cy="12" r="6" fill="#eef1f3" stroke="#667"/></svg></button>
                        <button class="tool off" aria-label="修剪"><svg viewBox="0 0 20 20"><path d="M6 2h12v11H6z" fill="#eef1f3" stroke="#667"/><circle cx="7" cy="13" r="6" fill="#c4ccd2"/></svg></button>
                        <button class="tool off" aria-label="阵列"><svg viewBox="0 0 20 20"><path d="M1 4l3-3h15v15l-3 3H1z" fill="#b9bfc4" stroke="#667"/><path d="M1 4h15v15H1z" fill="#f3f5f6" stroke="#667"/><path d="M4 8h10M4 12h10M4 16h10" stroke="#556" stroke-width="2" stroke-dasharray="2 2"/></svg></button>
                    </div>
                </div>
            </div>
        </div>
    </div>
    <span class="orb"></span>
</body>
</html>
```
FILE: styles.css
```css
* {
    box-sizing: border-box;
}
body {
    margin: 0;
    height: 100vh;
    padding: 1px 0;
    overflow: hidden;
    position: relative;
    background: #12233c;
    color: #2b3238;
    font-family: "Open Sans", "Noto Sans CJK SC", sans-serif;
    font-size: 12px;
}
button {
    margin: 0;
    padding: 0;
    border: 0;
    background: none;
    color: inherit;
    font: inherit;
}
ul {
    margin: 0;
    padding: 0;
    list-style: none;
}
.defs {
    position: absolute;
}

/* Ventana */
.window {
    height: 100%;
    display: flex;
    flex-direction: column;
    padding: 0 6px 5px;
    border: 1px solid #3c4350;
    border-radius: 7px 7px 5px 5px;
    background: linear-gradient(to bottom, #c6d8ec 0, #dbe6f2 28px, #e8eff7 200px, #b2cae4 206px, #b2cae4 100%);
    box-shadow: inset 0 0 0 1px #eef5fb;
}
.titlebar {
    flex: none;
    height: 27px;
    margin: 0 -5px;
    padding: 0 0 2px 7px;
    display: flex;
    align-items: center;
    background: linear-gradient(50deg, #dce8f4 0, #c9daec 18%, #b4cae4 32%, #acc5e0 45%, #b9cfe8 47%, #b7cee8 62%, #a2b9d4 67%, #bacfe9 70%, #aec5e0 78%, #b7cfe9 80%, #cbdcee 100%);
    border-radius: 6px 6px 0 0;
    color: #111;
}
.app-icon {
    width: 14px;
    height: 14px;
    margin-right: 6px;
}
.title {
    flex: 1;
}
.window-buttons {
    align-self: flex-start;
    display: flex;
    margin-right: 6px;
    border: 1px solid #5b6675;
    border-top: 0;
    border-radius: 0 0 5px 5px;
    overflow: hidden;
}
.window-buttons button {
    width: 27px;
    height: 17px;
    display: flex;
    align-items: center;
    justify-content: center;
    border-right: 1px solid #5b6675;
    background: linear-gradient(#d4dfea 0, #c3cfdd 45%, #98a8bb 50%, #b4c4d6 100%);
}
.window-buttons .close {
    width: 46px;
    border-right: 0;
    background: linear-gradient(#dfa498 0, #cf7060 45%, #b93e28 50%, #d3795c 100%);
}
.window-buttons svg {
    width: 14px;
    height: 12px;
}
.client {
    flex: 1;
    min-height: 0;
    display: flex;
    flex-direction: column;
    border: 1px solid #5d666f;
    background: #dce9f2;
}

/* Menú */
.menubar {
    flex: none;
    height: 30px;
    display: flex;
    align-items: flex-end;
    background: linear-gradient(#f3fafd, #e6edf5);
    border-bottom: 1px solid #b4cbdb;
}
.menubar button {
    height: 24px;
    padding: 0 8px 0 7px;
    border-top: 1px solid transparent;
    white-space: nowrap;
}
.menubar .wide {
    padding: 0 10px;
}
.menubar .active {
    padding: 0 6px;
    border: 1px solid #8eb0c4;
    border-bottom: 0;
    border-radius: 4px 4px 0 0;
    background: linear-gradient(#fff, #e8f0f7);
    margin-right: 1px;
}

/* Barra de herramientas */
.toolbar {
    flex: none;
    height: 34px;
    display: flex;
    align-items: center;
    border-top: 1px solid #fff;
    border-bottom: 1px solid #b4cbdb;
}
.grip {
    flex: none;
    width: 14px;
    height: 28px;
    background: repeating-linear-gradient(to bottom, #5b86a5 0 1px, transparent 1px 2px) 4px 0 / 1px 100% no-repeat,
        repeating-linear-gradient(to bottom, #5b86a5 0 1px, transparent 1px 2px) 6px 0 / 1px 100% no-repeat;
}
.tool {
    flex: none;
    width: 26px;
    height: 26px;
    margin: 0 1px;
    display: flex;
    align-items: center;
    justify-content: center;
    border: 1px solid transparent;
    border-radius: 3px;
}
.tool svg {
    flex: none;
    width: 20px;
    height: 20px;
}
.tool.on {
    border-color: #6f93ab;
    border-top-color: #54707f;
    background: linear-gradient(#c9e1f4, #bbdcf6);
}
.tool.off {
    opacity: 0.5;
}
.drop {
    flex: none;
    width: 13px;
    height: 24px;
    display: flex;
    align-items: center;
    justify-content: center;
}
.drop::after {
    content: "";
    border: 3px solid transparent;
    border-top: 4px solid #222b33;
    border-bottom: 0;
}
.drop.off::after {
    border-top-color: #a9b4bc;
}
.picker {
    flex: none;
    width: 39px;
    height: 26px;
    margin: 0 1px;
    display: flex;
    align-items: center;
    border: 1px solid #b3bdc4;
    border-radius: 3px;
}
.picker svg {
    width: 25px;
    height: 24px;
    border-right: 1px solid #b3bdc4;
}

/* Mensajes */
.messages {
    flex: none;
    height: 82px;
    display: flex;
    justify-content: space-between;
    align-items: flex-end;
    padding: 0 4px 1px 2px;
    border-top: 1px solid #fff;
    border-bottom: 1px solid #fff;
    font-size: 11px;
}
.messages ul {
    align-self: flex-start;
    padding-top: 3px;
}
.messages li {
    height: 16px;
    display: flex;
    align-items: center;
    white-space: nowrap;
}
.messages svg {
    width: 12px;
    height: 12px;
    margin-right: 2px;
}
.messages .warn {
    width: 14px;
    height: 14px;
    margin-right: 0;
}
.status {
    display: flex;
    align-items: center;
    gap: 99px;
}
.light {
    width: 32px;
    height: 24px;
    display: flex;
    align-items: center;
    justify-content: center;
    border: 1px solid #b9cbd8;
    border-width: 0 1px;
}
.light svg {
    width: 12px;
    height: 20px;
    margin: 0;
}
.filter {
    width: 286px;
    height: 20px;
    padding: 0 20px 0 5px;
    border: 1px solid #6f9cb5;
    border-radius: 3px;
    appearance: none;
    background: linear-gradient(to bottom left, #222b33 50%, transparent 50%) no-repeat right 7px center / 3px 4px,
        linear-gradient(to bottom right, #222b33 50%, transparent 50%) no-repeat right 4px center / 3px 4px,
        #fff;
    color: #222;
    font: inherit;
    font-size: 12px;
    line-height: 18px;
}

.workspace {
    flex: 1;
    min-height: 0;
    display: flex;
}

/* Navegador */
.navigator {
    flex: none;
    width: 249px;
    display: grid;
    grid-template-columns: 240px 9px;
    grid-template-rows: 29px 1fr;
    background: linear-gradient(to right, #fff 30px, rgba(255, 255, 255, 0) 200px) 0 28px no-repeat,
        repeating-linear-gradient(135deg, #d7e4ed 0 2px, #cfdfe9 2px 4px);
}
.tabs {
    grid-column: 1 / 3;
    display: flex;
    padding: 3px 0 0 7px;
}
.tab {
    width: 46px;
    padding: 0 0 0 11px;
    margin-right: -4px;
    display: flex;
    align-items: center;
    background: linear-gradient(#a8c7dd, #c4d9e7);
    clip-path: polygon(0 0, 30px 0, 36px 5px, 46px 100%, 0 100%);
    border-radius: 5px 0 0 0;
}
.tab.active {
    background: #fff;
}
.tab svg {
    width: 20px;
    height: 20px;
}
.panel {
    display: flex;
    flex-direction: column;
    min-height: 0;
    padding: 0 7px 8px 7px;
    border-top: 1px solid #a3adb4;
    border-right: 1px solid #b9c3ca;
    border-radius: 0 4px 0 0;
}
.panel-head {
    flex: none;
    height: 30px;
    display: flex;
    align-items: center;
}
.panel-head h2 {
    flex: 1;
    margin: 0 0 2px 18px;
    font-size: 13px;
    font-weight: bold;
}
.panel-head .tool {
    width: 22px;
    margin: 0 1px 0 5px;
}
.panel-head .drop {
    width: 11px;
}
.panel-head .drop::after {
    border-width: 4px 4px 0;
}
.tree {
    flex: 1;
    min-height: 0;
    display: grid;
    grid-template-columns: 1fr 20px;
    grid-template-rows: 1fr 19px;
    border: 1px solid #7ba1b8;
    border-radius: 4px;
    background: #fff;
    overflow: hidden;
}
.nodes {
    min-height: 0;
    display: flex;
    flex-direction: column;
    justify-content: flex-end;
    overflow: hidden;
}
.nodes li {
    flex: none;
    height: 20px;
    display: flex;
    align-items: center;
    white-space: nowrap;
    --dot: #222;
    --fill: #9ff;
}
.nodes li svg {
    width: 16px;
    height: 16px;
    margin-right: 3px;
}
.nodes .off {
    color: #b8b8b8;
    --dot: #c6c3ae;
    --fill: none;
}
.nodes .off svg {
    background: #e3e3e3;
    color: #c6c3ae;
}
.nodes .blue {
    color: #0a84ff;
    --dot: #006;
}
.branch {
    width: 24px;
    height: 20px;
    display: flex;
    align-items: center;
    background: repeating-linear-gradient(to bottom, #999 0 1px, transparent 1px 2px) 12px 0 / 1px 100% no-repeat,
        repeating-linear-gradient(to right, #999 0 1px, transparent 1px 2px) 12px 10px / 12px 1px no-repeat;
}
.last .branch {
    background-size: 1px 10px, 12px 1px;
}
.branch button {
    width: 9px;
    height: 9px;
    margin-left: 8px;
    border: 1px solid #8fb0c6;
    border-radius: 2px;
    background: linear-gradient(#222, #222) center / 5px 1px no-repeat,
        linear-gradient(#222, #222) center / 1px 5px no-repeat,
        linear-gradient(#fff, #c6dcea);
}
.vscroll {
    display: flex;
    flex-direction: column;
    align-items: center;
    border-left: 1px solid #bfd5e2;
    padding: 3px 0;
}
.vscroll .thumb {
    width: 12px;
    height: 192px;
    margin-top: auto;
    border: 1px solid #7ba6bf;
    border-radius: 6px;
    background: repeating-linear-gradient(to bottom, #46708c 0 1px, transparent 1px 2px) center / 3px 8px no-repeat,
        linear-gradient(to right, #fff, #c2d8e6);
}
.hscroll {
    display: flex;
    align-items: center;
    border-top: 1px solid #bfd5e2;
    padding: 0 3px;
}
.hscroll .thumb {
    width: 158px;
    height: 12px;
    border: 1px solid #7ba6bf;
    border-radius: 6px;
    background: repeating-linear-gradient(to right, #46708c 0 1px, transparent 1px 2px) center / 8px 3px no-repeat,
        linear-gradient(#fff, #c2d8e6);
}
.vscroll button,
.hscroll button {
    width: 14px;
    height: 12px;
    display: flex;
    align-items: center;
    justify-content: center;
}
.hscroll .right {
    margin-left: auto;
}
.vscroll button::after,
.hscroll button::after {
    content: "";
    border: 4px solid transparent;
}
.vscroll .up::after {
    border-top: 0;
    border-bottom: 5px solid #6f9db8;
}
.vscroll .down::after {
    border-bottom: 0;
    border-top: 5px solid #6f9db8;
}
.hscroll .left::after {
    border-left: 0;
    border-right: 5px solid #6f9db8;
}
.hscroll .right::after {
    border-right: 0;
    border-left: 5px solid #6f9db8;
}
.corner {
    background: #e3edf5;
}
.sash {
    display: flex;
    flex-direction: column;
    justify-content: center;
    gap: 10px;
    padding-bottom: 24px;
}
.sash button {
    height: 93px;
    display: flex;
    align-items: center;
    justify-content: center;
    border: 1px solid #a5c3d8;
    border-right: 0;
    border-radius: 4px 0 0 4px;
}
.sash .dark {
    border-color: #8c98a1;
    background: #c6d8e4;
}
.sash button::after {
    content: "";
    box-sizing: border-box;
    width: 3px;
    height: 3px;
    border: 1px solid #333;
}

/* Área gráfica */
.viewport {
    flex: 1;
    min-width: 0;
    background: linear-gradient(#c4daea 0, #5b7baa 100%);
}
.viewport svg {
    display: block;
    width: 100%;
    height: 100%;
}
.axis-label {
    fill: #96510f;
    font-family: "Liberation Mono", monospace;
    font-size: 10px;
}

/* Características */
.features {
    flex: none;
    display: flex;
    gap: 1px;
}
.column {
    display: flex;
    flex-direction: column;
}
.column:first-child {
    width: 40px;
}
.column .tool {
    width: 28px;
    height: 28px;
    margin: 0;
}
.rule {
    flex: none;
    height: 14px;
    background: repeating-linear-gradient(to right, #5b86a5 0 1px, transparent 1px 2px) 0 5px / 100% 1px no-repeat,
        repeating-linear-gradient(to right, #5b86a5 0 1px, transparent 1px 2px) 0 7px / 100% 1px no-repeat;
}
.flyout {
    display: flex;
    align-items: center;
}
.more::after {
    content: "";
    display: block;
    margin-left: 4px;
    border: 3px solid transparent;
    border-left: 4px solid #222b33;
    border-right: 0;
}
.note {
    --paper: #ffffb0;
    --edge: #808000;
    --ink: #222;
}
.orb {
    position: absolute;
    left: 15px;
    bottom: -17px;
    width: 23px;
    height: 22px;
    border: 1px solid #2c5a7c;
    border-radius: 50%;
    background: #9cc3dd;
}
```
